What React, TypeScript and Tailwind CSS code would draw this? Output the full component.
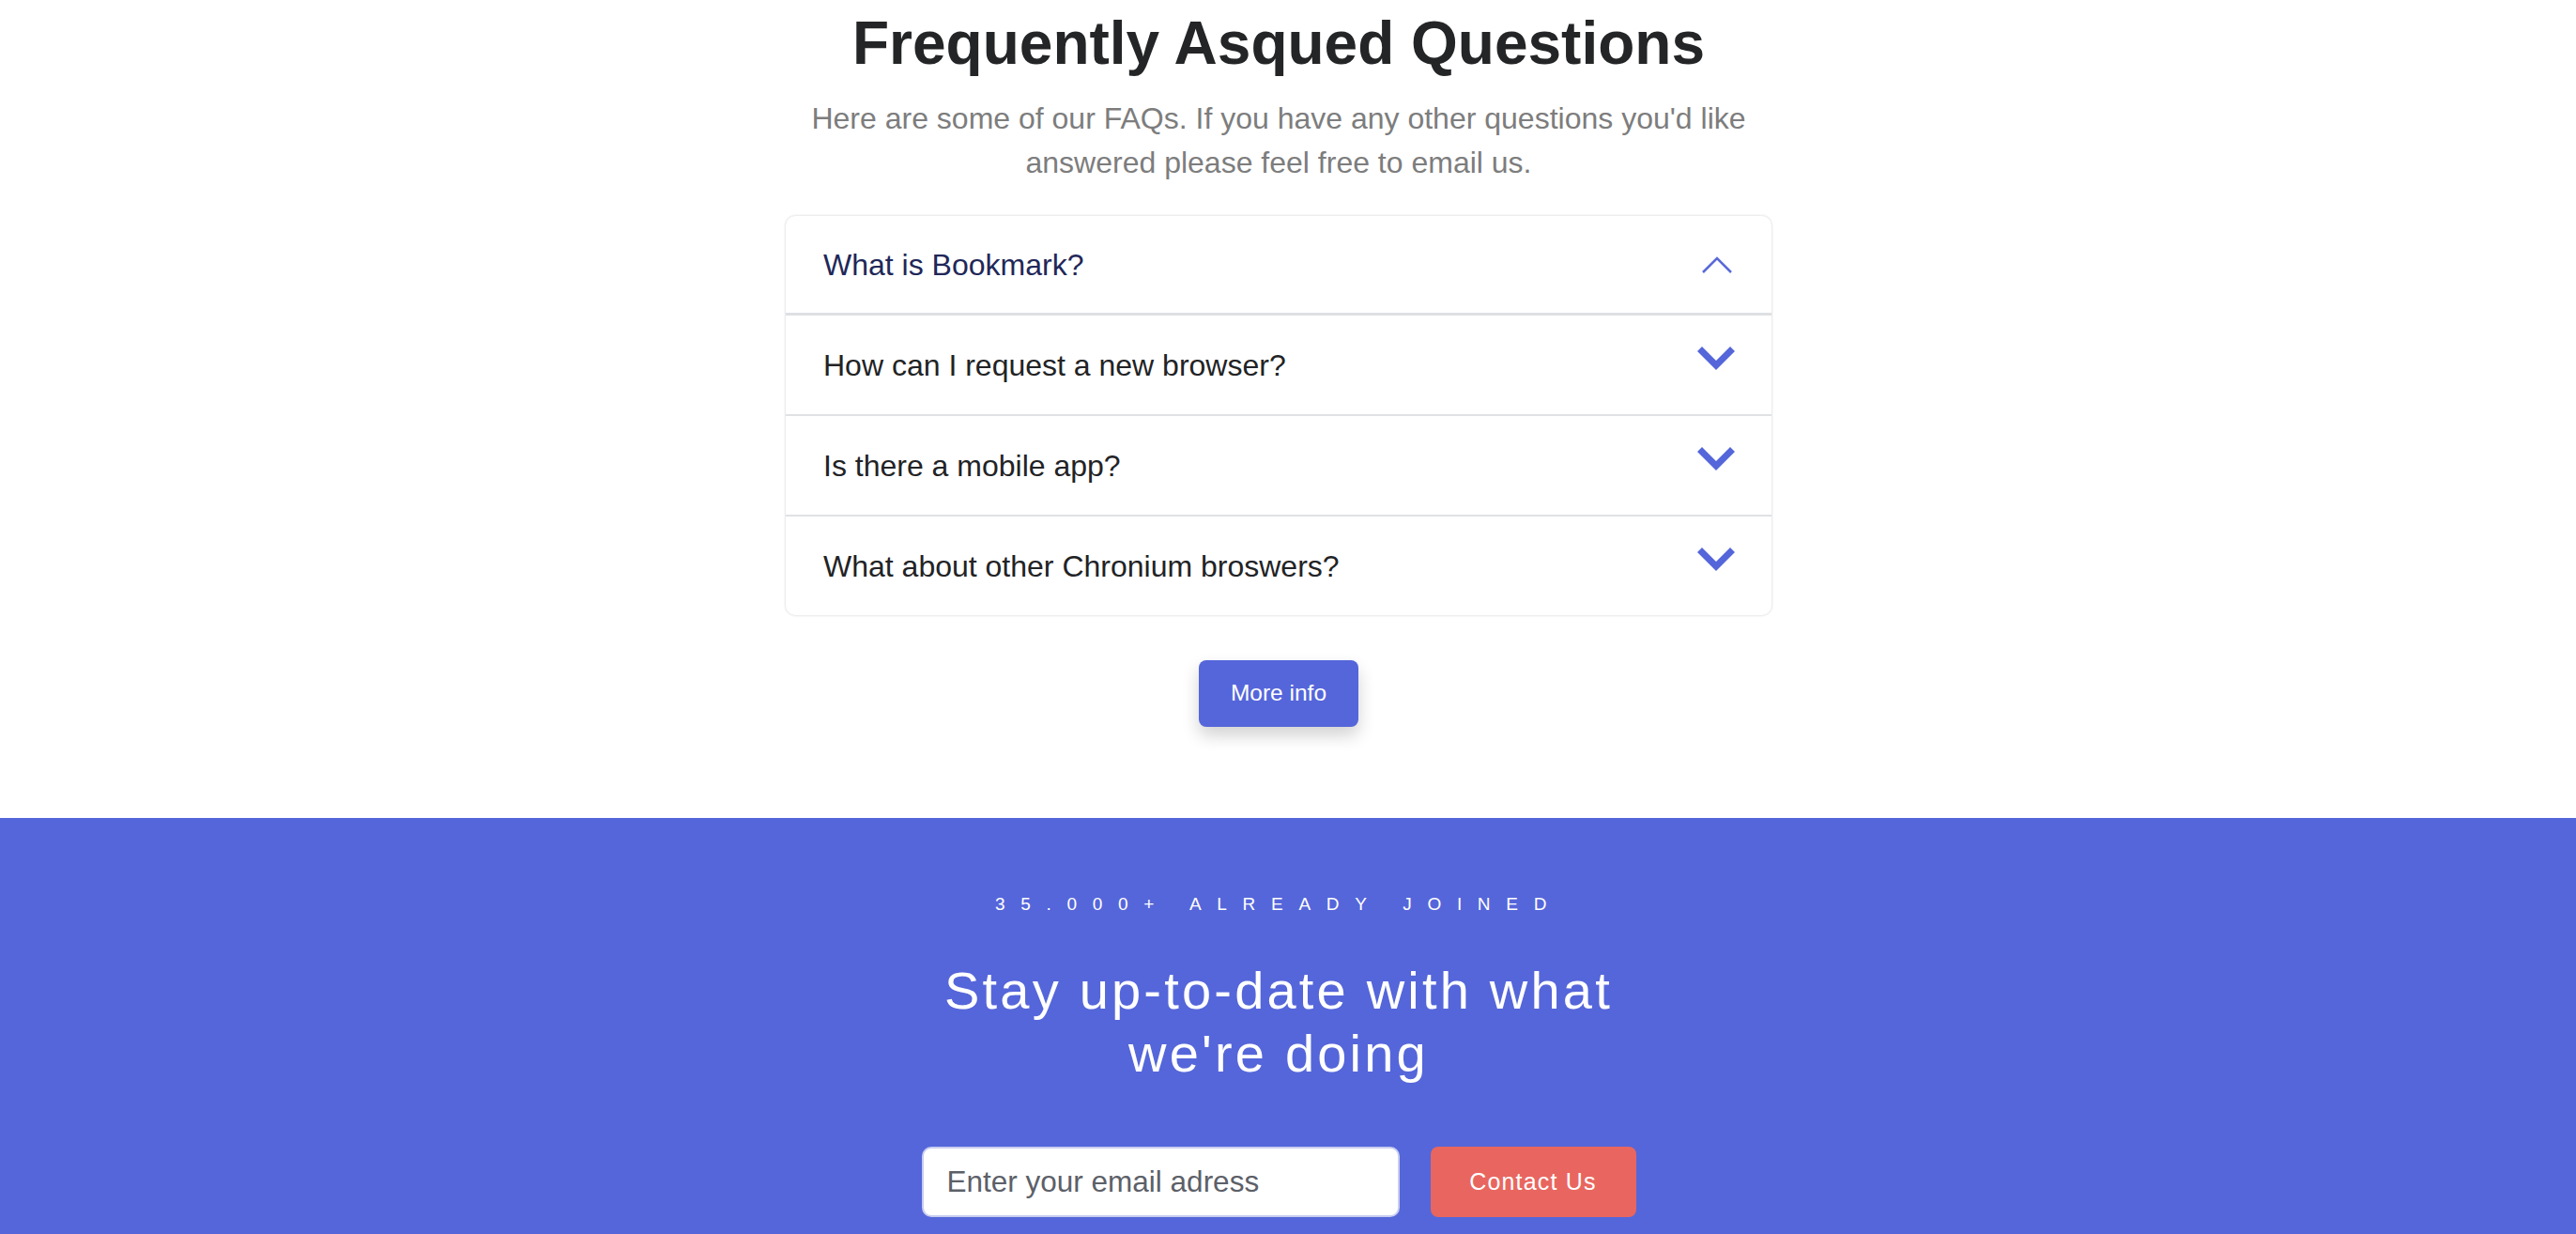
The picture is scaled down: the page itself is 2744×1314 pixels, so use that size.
import { useState } from "react";

const questions = [
  "What is Bookmark?",
  "How can I request a new browser?",
  "Is there a mobile app?",
  "What about other Chronium broswers?",
];

function ChevronUp() {
  return (
    <svg width="32" height="18" viewBox="0 0 32 18" fill="none">
      <polyline
        points="1,17 16,2 31,17"
        stroke="#5a6ad8"
        strokeWidth="2.6"
        strokeLinejoin="miter"
      />
    </svg>
  );
}

function ChevronDown() {
  return (
    <svg width="40" height="25" viewBox="0 0 40 25">
      <polygon points="0,5 5,0 20,15 35,0 40,5 20,25" fill="#5466d9" />
    </svg>
  );
}

export default function App() {
  const [open, setOpen] = useState(0);
  const [email, setEmail] = useState("");

  return (
    <div className="min-h-screen bg-white font-['Liberation_Sans',Arial,sans-serif]">

      {/* FAQ */}
      <section className="flex flex-col items-center pt-[8px] pr-[20px]">
        <h1 className="text-[64px] leading-[77px] font-bold text-[#242526]">
          Frequently Asqued Questions
        </h1>

        <p className="mt-[18px] max-w-[1050px] text-center text-[32px] leading-[47px] text-[#7d7d7d]">
          Here are some of our FAQs. If you have any other questions you'd like
          answered please feel free to email us.
        </p>

        <div className="mt-[33px] w-[1050px] rounded-[10px] bg-white shadow-[0_0_3px_rgba(0,0,0,0.2)]">
          {questions.map((q, i) => (
            <button
              key={q}
              onClick={() => setOpen(open === i ? -1 : i)}
              className={
                i === 0
                  ? "flex w-full items-center justify-between pl-[40px] pr-[39px] h-[106px] border-b-[3px] border-[#dfe0e4] text-left"
                  : i === questions.length - 1
                  ? "flex w-full items-center justify-between pl-[40px] pr-[39px] h-[105px] text-left"
                  : "flex w-full items-center justify-between pl-[40px] pr-[39px] h-[107px] border-b-2 border-[#dfe1e4] text-left"
              }
            >
              <span
                className={
                  open === i
                    ? "text-[32px] text-[#212758]"
                    : "text-[32px] text-[#222325]"
                }
              >
                {q}
              </span>
              {open === i ? (
                <span className="flex pr-[3px]">
                  <ChevronUp />
                </span>
              ) : (
                <span className="flex mb-[14px]">
                  <ChevronDown />
                </span>
              )}
            </button>
          ))}
        </div>

        <button className="mt-[48px] w-[170px] h-[71px] rounded-[8px] bg-[#5566da] text-white text-[24.5px] shadow-[0_9px_18px_rgba(0,0,0,0.18)]">
          More info
        </button>
      </section>

      {/* Newsletter */}
      <section className="mt-[97px] bg-[#5566da] pt-[80px] pb-[80px]">
        <div className="flex flex-col items-center pr-[20px]">
          <p className="text-[19px] leading-[23px] tracking-[16.7px] text-white">
            35.000+ ALREADY JOINED
          </p>

          <h2 className="mt-[47px] max-w-[780px] text-center text-[56px] leading-[67px] tracking-[3.2px] text-white">
            Stay up-to-date with what we're doing
          </h2>

          <form
            onSubmit={(e) => e.preventDefault()}
            className="mt-[66px] flex gap-[33px]"
          >
            <input
              type="email"
              value={email}
              onChange={(e) => setEmail(e.target.value)}
              placeholder="Enter your email adress"
              className="w-[509px] h-[75px] rounded-[10px] border-2 border-[#c9cdef] bg-white pl-[25px] text-[31.5px] text-[#333] placeholder:text-[#5c6068] outline-none"
            />
            <button
              type="submit"
              className="w-[219px] h-[75px] rounded-[8px] bg-[#e8665f] text-white text-[25px] tracking-[1.2px]"
            >
              Contact Us
            </button>
          </form>
        </div>
      </section>
    </div>
  );
}
